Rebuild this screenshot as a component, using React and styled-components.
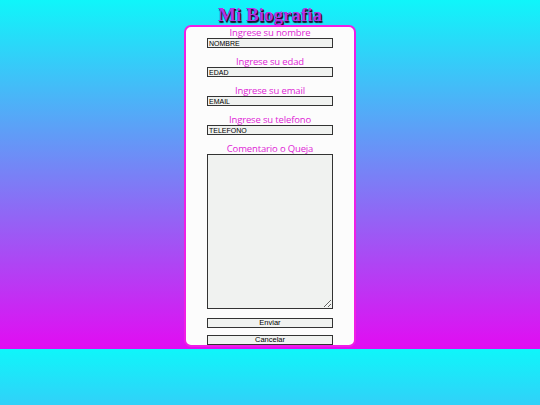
import React from "react";
import styled, { createGlobalStyle } from "styled-components";

const Global = createGlobalStyle`
  html {
    background: linear-gradient(to bottom, #0ff6fa, #e20cf2) 0 0 / 100% 349px repeat;
    min-height: 100%;
  }
  body {
    margin: 0;
    font-family: "Liberation Sans", Arial, sans-serif;
  }
`;

const Page = styled.div`
  display: flex;
  flex-direction: column;
  align-items: center;
`;

const Title = styled.h1`
  margin: 0;
  padding-top: 4px;
  height: 21px;
  line-height: 21px;
  font-family: "Liberation Serif", "Times New Roman", serif;
  font-size: 19px;
  font-weight: bold;
  color: #b531e6;
  text-shadow: 1px 1px 0 #1a1030, 1px 2px 1px #1a1030;
`;

const Card = styled.form`
  box-sizing: content-box;
  width: 168px;
  margin: 0;
  border: 2px solid #f01ee6;
  border-radius: 7px;
  background: #fcfcfc;
  display: flex;
  flex-direction: column;
  align-items: center;
`;

const Field = styled.div`
  display: flex;
  flex-direction: column;
  align-items: center;
  margin-bottom: ${(p) => p.$gap ?? 8}px;
`;

const Label = styled.label`
  height: 11px;
  line-height: 11px;
  font-family: "Comic Sans MS", "Open Sans", "Liberation Sans", sans-serif;
  font-size: 9.5px;
  letter-spacing: -0.15px;
  color: #e01ed6;
`;

const Input = styled.input`
  box-sizing: border-box;
  width: 126px;
  height: 10px;
  margin: 0;
  padding: 0 1px;
  border: 1px solid #333;
  background: #f0f2f0;
  font-family: "Liberation Sans", Arial, sans-serif;
  font-size: 7px;
  line-height: 8px;
  color: #000;
  outline: none;
`;

const TextArea = styled.textarea`
  box-sizing: border-box;
  width: 126px;
  height: 155px;
  margin: 0;
  padding: 1px;
  border: 1px solid #333;
  background: #f0f2f0;
  font-family: "Liberation Sans", Arial, sans-serif;
  font-size: 7px;
  display: block;
`;

const Button = styled.button`
  box-sizing: border-box;
  width: 126px;
  height: 10px;
  margin: 0 0 ${(p) => p.$gap ?? 0}px;
  padding: 0;
  border: 1px solid #333;
  background: #f0f2f0;
  font-family: "Liberation Sans", Arial, sans-serif;
  font-size: 7.5px;
  line-height: 8px;
  color: #000;
  cursor: pointer;
`;

const fields = [
  { label: "Ingrese su nombre", ph: "NOMBRE" },
  { label: "Ingrese su edad", ph: "EDAD" },
  { label: "Ingrese su email", ph: "EMAIL" },
  { label: "Ingrese su telefono", ph: "TELEFONO" },
];

export default function App() {
  return (
    <>
      <Global />
      <Page>
        <Title>Mi Biografia</Title>
        <Card onSubmit={(e) => e.preventDefault()}>
          {fields.map((f) => (
            <Field key={f.ph}>
              <Label>{f.label}</Label>
              <Input defaultValue={f.ph} />
            </Field>
          ))}
          <Field $gap={9}>
            <Label>Comentario o Queja</Label>
            <TextArea />
          </Field>
          <Button type="submit" $gap={7}>Enviar</Button>
          <Button type="button">Cancelar</Button>
        </Card>
      </Page>
    </>
  );
}
